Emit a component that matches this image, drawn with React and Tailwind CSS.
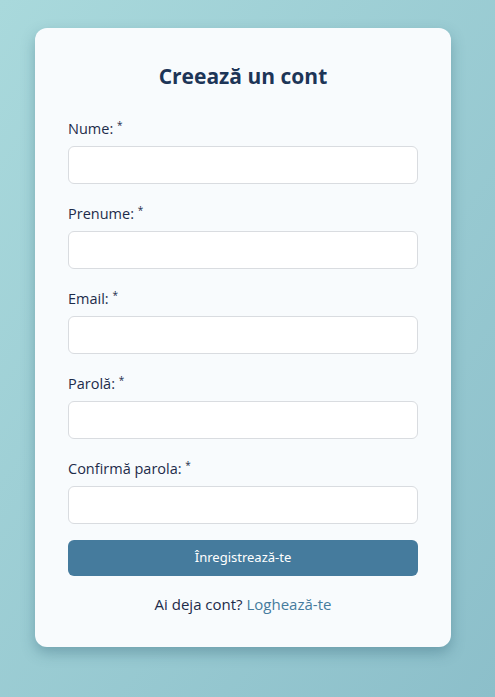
import React, { useState } from 'react';

const fields = [
    { key: 'nume', label: 'Nume:', type: 'text' },
    { key: 'prenume', label: 'Prenume:', type: 'text' },
    { key: 'email', label: 'Email:', type: 'email' },
    { key: 'parola', label: 'Parolă:', type: 'password' },
    { key: 'confirm', label: 'Confirmă parola:', type: 'password' },
];

export default function App() {
    const [form, setForm] = useState({});
    const set = (k) => (e) => setForm((prev) => ({ ...prev, [k]: e.target.value }));

    return (
        <div className="min-h-[697px] w-full bg-gradient-to-br from-[#a9d9dc] to-[#8cbfca] pt-[28px] font-['Open_Sans',sans-serif]">
            <form
                onSubmit={(e) => e.preventDefault()}
                className="ml-[35px] w-[416px] rounded-[12px] bg-[#f8fbfd] px-[33px] pt-[33px] pb-[33px] shadow-[0_6px_14px_rgba(40,90,110,0.35)]"
            >
                {/* Heading */}
                <h2 className="text-center text-[21px] leading-[30px] font-bold text-[#1d3557]">Creează un cont</h2>

                <div className="mt-[28px] flex flex-col gap-[20px]">
                    {fields.map((f) => (
                        <div key={f.key}>
                            <label className="mb-[7px] block text-[14.5px] leading-[20px] font-medium text-[#1d2b4a]">
                                {f.label} <sup className="text-[10px] text-[#1d2b4a]">*</sup>
                            </label>
                            <input
                                type={f.type}
                                value={form[f.key] || ''}
                                onChange={set(f.key)}
                                className="block h-[38px] w-full rounded-[6px] border border-[#d9dce0] bg-white px-3 text-sm focus:outline-none"
                            />
                        </div>
                    ))}
                </div>

                {/* Actions */}
                <button
                    type="submit"
                    className="mt-[16px] h-[36px] w-full rounded-[6px] bg-[#457b9d] text-[13px] text-white font-['Noto_Sans',sans-serif]"
                >
                    Înregistrează-te
                </button>

                <p className="mt-[18px] text-center text-[15px] leading-[20px] font-medium text-[#1d2b4a]">
                    Ai deja cont? <a href="#" className="text-[#457b9d]">Loghează-te</a>
                </p>
            </form>
        </div>
    );
}
